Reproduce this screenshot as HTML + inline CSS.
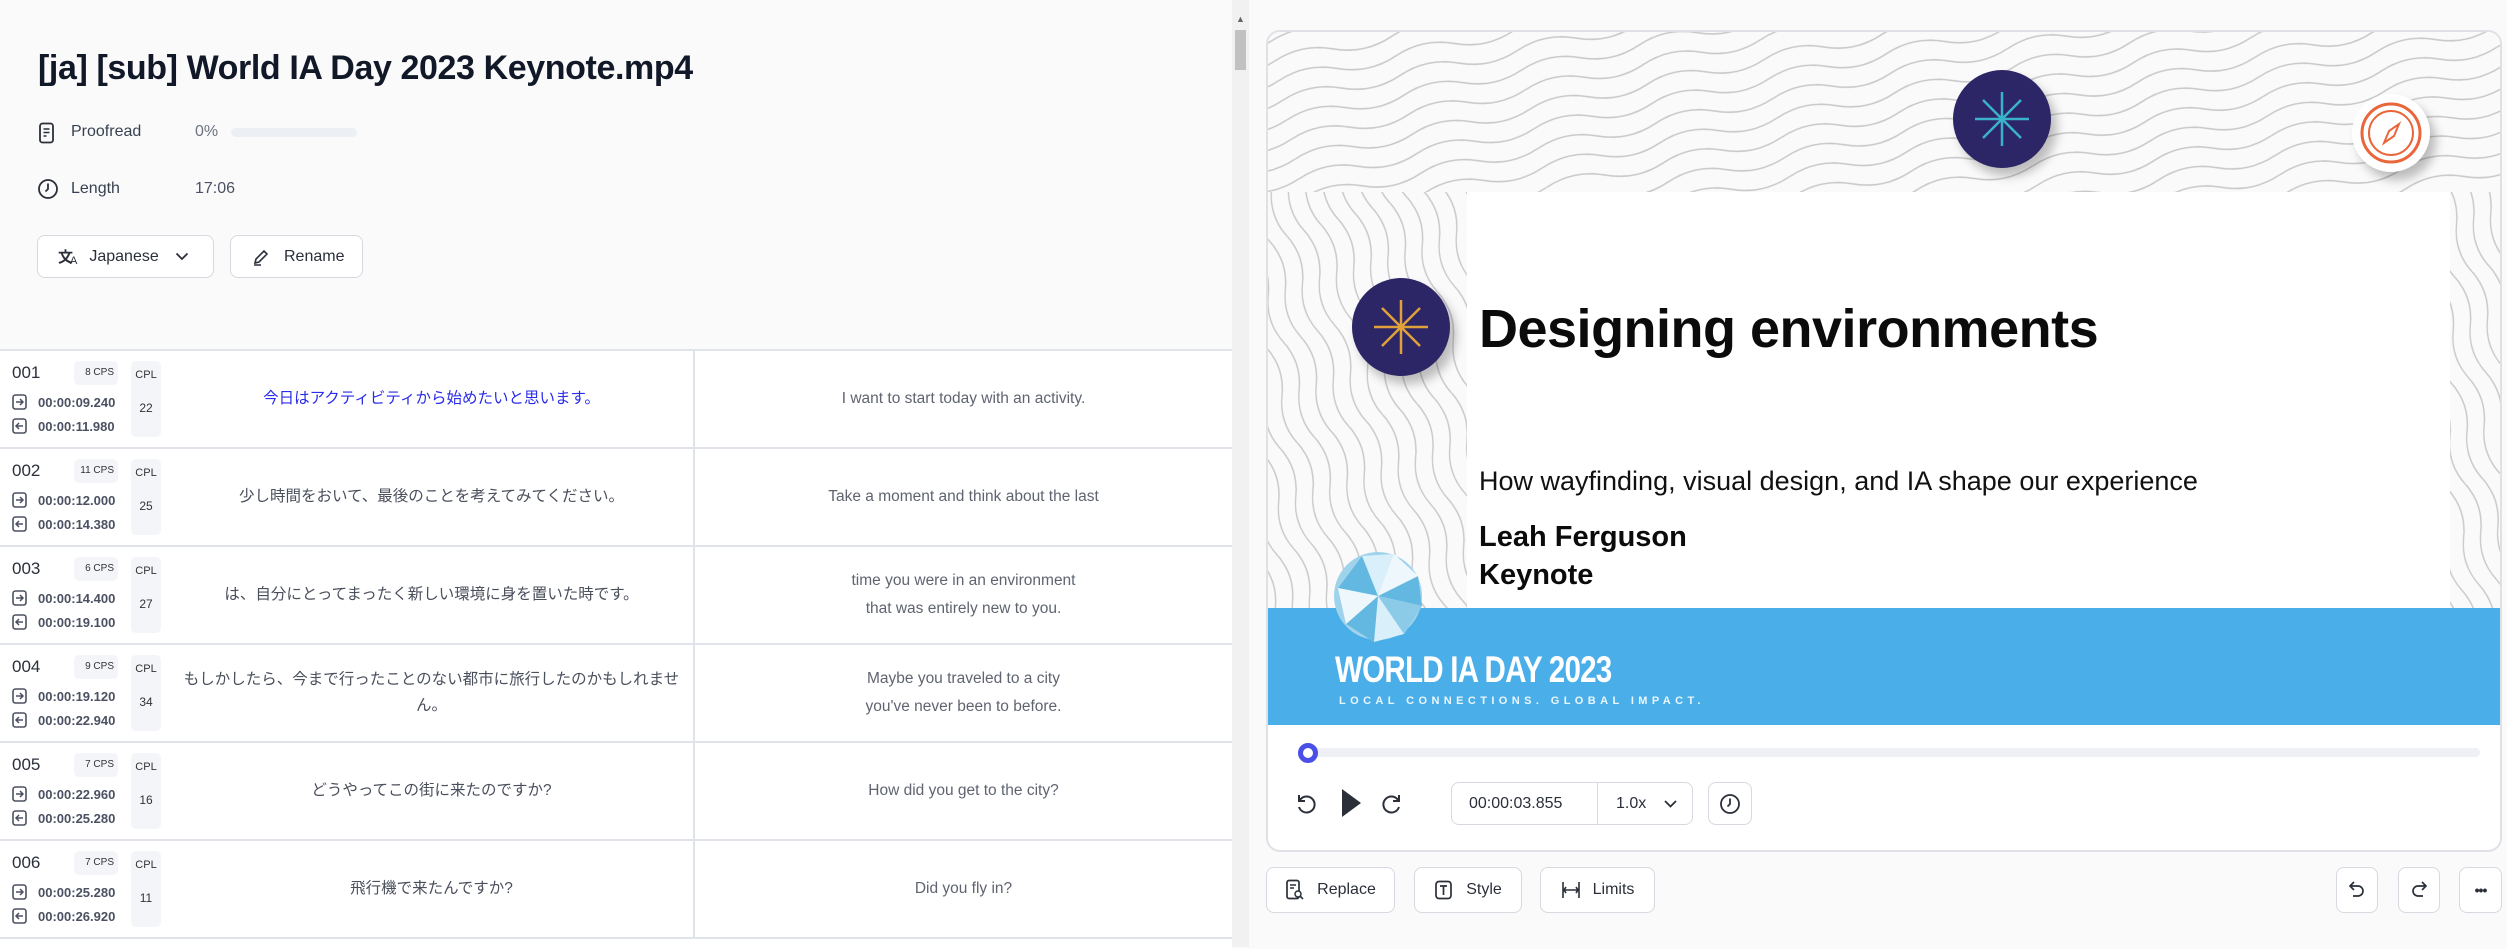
<!DOCTYPE html>
<html><head><meta charset="utf-8">
<style>
*{box-sizing:border-box;margin:0;padding:0}
body{width:2507px;height:947px;overflow:hidden;background:#fafafb;font-family:"Liberation Sans","Noto Sans CJK JP",sans-serif;color:#1f2330;position:relative}
.abs{position:absolute}
.title{left:38px;top:49px;font-size:34px;font-weight:bold;color:#111827;letter-spacing:-0.4px}
.meta{font-size:16px;color:#374151}
.btn{position:absolute;border:1px solid #d6d9e0;border-radius:8px;background:#fff;font-size:16px;color:#2a2f3a;display:flex;align-items:center}
.table{position:absolute;left:0;top:349px;width:1232px;height:600px;background:#fff;border-top:2px solid #e1e3ea}
.row{position:absolute;left:0;width:1232px;height:98px;border-bottom:2px solid #e1e3ea}
.num{position:absolute;left:12px;top:12px;font-size:17px;color:#2a2f3a}
.cps{position:absolute;left:74px;top:10px;width:44px;height:24px;background:#f4f5f8;border-radius:5px;font-size:10px;color:#333;text-align:right;padding-right:4px;line-height:24px;white-space:nowrap}
.cpl{position:absolute;left:131px;top:10px;width:30px;height:76px;background:#f4f5f8;border-radius:5px;font-size:11px;color:#333;text-align:center}
.cpl b{display:block;font-weight:normal;margin-top:8px}
.cpl i{display:block;font-style:normal;font-size:12px;margin-top:20px}
.tc{position:absolute;left:12px;font-size:13px;font-weight:bold;color:#4b5162;display:flex;align-items:center}
.tc svg{margin-right:11px}
.jp{position:absolute;left:170px;width:523px;top:0;height:96px;display:flex;align-items:center;justify-content:center;text-align:center;font-size:15.5px;color:#4a4f5c;line-height:26px;padding:0 8px}
.en{position:absolute;left:693px;width:539px;top:0;height:96px;border-left:2px solid #e1e3ea;display:flex;align-items:center;justify-content:center;text-align:center;font-size:15.5px;color:#5f6470;line-height:28px}
.card{position:absolute;left:1266px;top:30px;width:1236px;height:822px;border:2px solid #dfe1e7;border-radius:14px;background:#fff;overflow:hidden}
.circle{position:absolute;border-radius:50%;background:#2c2566;box-shadow:6px 8px 10px rgba(0,0,0,.25)}
.tb{position:absolute;top:867px;height:46px;border:1px solid #d6d9e0;border-radius:8px;background:#fff;font-size:16px;color:#2a2f3a;display:flex;align-items:center;justify-content:center}
</style></head><body>

<svg width="0" height="0" style="position:absolute"><defs>
<symbol id="in" viewBox="0 0 15 16"><rect x="1" y="1" width="13" height="14" rx="2.5" fill="none" stroke="#4b5162" stroke-width="1.6"/><path d="M4 8h7M8 5l3 3-3 3" fill="none" stroke="#4b5162" stroke-width="1.5"/></symbol>
<symbol id="out" viewBox="0 0 15 16"><rect x="1" y="1" width="13" height="14" rx="2.5" fill="none" stroke="#4b5162" stroke-width="1.6"/><path d="M11 8H4M7 5L4 8l3 3" fill="none" stroke="#4b5162" stroke-width="1.5"/></symbol>
</defs></svg>

<div class="abs title">[ja] [sub] World IA Day 2023 Keynote.mp4</div>

<svg class="abs" style="left:38px;top:122px" width="18" height="22" viewBox="0 0 18 22"><rect x="2" y="1.5" width="13" height="19" rx="2.5" fill="none" stroke="#2a2f3a" stroke-width="1.8"/><path d="M5.5 7h6M5.5 10.5h6M5.5 14h3" stroke="#2a2f3a" stroke-width="1.6"/></svg>
<div class="abs meta" style="left:71px;top:123px">Proofread</div>
<div class="abs meta" style="left:195px;top:123px;color:#6b7280">0%</div>
<div class="abs" style="left:231px;top:128px;width:126px;height:9px;border-radius:5px;background:#eceff4"></div>

<svg class="abs" style="left:37px;top:178px" width="22" height="22" viewBox="0 0 22 22"><circle cx="11" cy="11" r="9" fill="none" stroke="#2a2f3a" stroke-width="1.8"/><path d="M11 5.5V11l-2.5 2.5" fill="none" stroke="#2a2f3a" stroke-width="1.8"/></svg>
<div class="abs meta" style="left:71px;top:180px">Length</div>
<div class="abs meta" style="left:195px;top:180px;color:#4b5162">17:06</div>

<div class="btn" style="left:37px;top:235px;width:177px;height:43px"><span style="margin-left:20px;font-size:15px;font-weight:bold">文</span><span style="margin-left:-3px;font-size:11px;margin-top:8px">A</span><span style="margin-left:12px">Japanese</span><svg style="margin-left:16px" width="14" height="9" viewBox="0 0 14 9"><path d="M1.5 1.5l5.5 5.5 5.5-5.5" fill="none" stroke="#2a2f3a" stroke-width="1.8"/></svg></div>
<div class="btn" style="left:230px;top:235px;width:133px;height:43px"><svg style="margin-left:21px" width="18" height="18" viewBox="0 0 18 18"><path d="M3 15l1-4 8-8 3 3-8 8z M2 17h7" fill="none" stroke="#2a2f3a" stroke-width="1.6"/></svg><span style="margin-left:14px">Rename</span></div>

<div class="abs" style="left:1232px;top:0;width:17px;height:947px;background:#f1f1f1"></div>
<div class="abs" style="left:1235px;top:30px;width:11px;height:40px;background:#c1c1c1"></div>
<div class="abs" style="left:1236px;top:14px;font-size:9px;color:#666">▲</div>

<div class="table">
 <div class="row" style="top:0">
  <div class="num">001</div><div class="cps">8 CPS</div><div class="cpl"><b>CPL</b><i>22</i></div>
  <div class="tc" style="top:43px"><svg width="15" height="16"><use href="#in"/></svg>00:00:09.240</div>
  <div class="tc" style="top:67px"><svg width="15" height="16"><use href="#out"/></svg>00:00:11.980</div>
  <div class="jp" style="color:#2b2bea">今日はアクティビティから始めたいと思います。</div>
  <div class="en">I want to start today with an activity.</div>
 </div>
 <div class="row" style="top:98px">
  <div class="num">002</div><div class="cps">11 CPS</div><div class="cpl"><b>CPL</b><i>25</i></div>
  <div class="tc" style="top:43px"><svg width="15" height="16"><use href="#in"/></svg>00:00:12.000</div>
  <div class="tc" style="top:67px"><svg width="15" height="16"><use href="#out"/></svg>00:00:14.380</div>
  <div class="jp">少し時間をおいて、最後のことを考えてみてください。</div>
  <div class="en">Take a moment and think about the last</div>
 </div>
 <div class="row" style="top:196px">
  <div class="num">003</div><div class="cps">6 CPS</div><div class="cpl"><b>CPL</b><i>27</i></div>
  <div class="tc" style="top:43px"><svg width="15" height="16"><use href="#in"/></svg>00:00:14.400</div>
  <div class="tc" style="top:67px"><svg width="15" height="16"><use href="#out"/></svg>00:00:19.100</div>
  <div class="jp">は、自分にとってまったく新しい環境に身を置いた時です。</div>
  <div class="en">time you were in an environment<br>that was entirely new to you.</div>
 </div>
 <div class="row" style="top:294px">
  <div class="num">004</div><div class="cps">9 CPS</div><div class="cpl"><b>CPL</b><i>34</i></div>
  <div class="tc" style="top:43px"><svg width="15" height="16"><use href="#in"/></svg>00:00:19.120</div>
  <div class="tc" style="top:67px"><svg width="15" height="16"><use href="#out"/></svg>00:00:22.940</div>
  <div class="jp">もしかしたら、今まで行ったことのない都市に旅行したのかもしれません。</div>
  <div class="en">Maybe you traveled to a city<br>you've never been to before.</div>
 </div>
 <div class="row" style="top:392px">
  <div class="num">005</div><div class="cps">7 CPS</div><div class="cpl"><b>CPL</b><i>16</i></div>
  <div class="tc" style="top:43px"><svg width="15" height="16"><use href="#in"/></svg>00:00:22.960</div>
  <div class="tc" style="top:67px"><svg width="15" height="16"><use href="#out"/></svg>00:00:25.280</div>
  <div class="jp">どうやってこの街に来たのですか?</div>
  <div class="en">How did you get to the city?</div>
 </div>
 <div class="row" style="top:490px">
  <div class="num">006</div><div class="cps">7 CPS</div><div class="cpl"><b>CPL</b><i>11</i></div>
  <div class="tc" style="top:43px"><svg width="15" height="16"><use href="#in"/></svg>00:00:25.280</div>
  <div class="tc" style="top:67px"><svg width="15" height="16"><use href="#out"/></svg>00:00:26.920</div>
  <div class="jp">飛行機で来たんですか?</div>
  <div class="en">Did you fly in?</div>
 </div>
</div>

<div class="card">
 <div class="abs" style="left:0;top:0;width:1236px;height:693px;background:#fafafa;overflow:hidden">
  <svg width="1236" height="693" style="position:absolute;left:0;top:0">
   <defs>
    <pattern id="topo" width="240" height="60" patternUnits="userSpaceOnUse" patternTransform="rotate(-12)">
     <path d="M0 10 Q30 -2 60 10 T120 10 T180 10 T240 10 M0 30 Q30 18 60 30 T120 30 T180 30 T240 30 M0 50 Q30 38 60 50 T120 50 T180 50 T240 50" fill="none" stroke="#c9c9c9" stroke-width="1.5"/>
    </pattern>
    <pattern id="topo2" width="200" height="54" patternUnits="userSpaceOnUse" patternTransform="rotate(72)">
     <path d="M0 9 Q25 -2 50 9 T100 9 T150 9 T200 9 M0 27 Q25 16 50 27 T100 27 T150 27 T200 27 M0 45 Q25 34 50 45 T100 45 T150 45 T200 45" fill="none" stroke="#c9c9c9" stroke-width="1.5"/>
    </pattern>
   </defs>
   <rect width="1236" height="693" fill="url(#topo)"/>
   <rect x="0" y="160" width="200" height="420" fill="#fafafa"/>
   <rect x="0" y="160" width="200" height="420" fill="url(#topo2)"/>
   <rect x="1182" y="160" width="54" height="420" fill="#fafafa"/>
   <rect x="1182" y="160" width="54" height="420" fill="url(#topo2)"/>
  </svg>
  <div class="abs" style="left:199px;top:160px;width:983px;height:418px;background:#fff"></div>
  <div class="abs" style="left:211px;top:266px;font-size:54px;font-weight:bold;color:#0b0b0b;letter-spacing:-0.5px">Designing environments</div>
  <div class="abs" style="left:211px;top:434px;font-size:27px;color:#111">How wayfinding, visual design, and IA shape our experience</div>
  <div class="abs" style="left:211px;top:486px;font-size:29px;font-weight:bold;color:#0b0b0b;line-height:38px">Leah Ferguson<br>Keynote</div>
  <div class="circle" style="left:685px;top:38px;width:98px;height:98px"><svg width="98" height="98"><g stroke="#3ab2cc" stroke-width="2.5"><path d="M49 22v54M22 49h54M30 30l38 38M68 30L30 68"/></g></svg></div>
  <div class="circle" style="left:84px;top:246px;width:98px;height:98px"><svg width="98" height="98"><g stroke="#e0a13a" stroke-width="2.5"><path d="M49 22v54M22 49h54M30 30l38 38M68 30L30 68"/></g></svg></div>
  <div class="circle" style="left:1084px;top:62px;width:78px;height:78px;background:#fff"><svg width="78" height="78"><circle cx="39" cy="39" r="29" fill="none" stroke="#e8663a" stroke-width="3"/><circle cx="39" cy="39" r="22" fill="none" stroke="#e8663a" stroke-width="2"/><path d="M47 30l-5 12-10 7 5-12z" fill="none" stroke="#e8663a" stroke-width="2"/></svg></div>
  <div class="abs" style="left:0;top:576px;width:1236px;height:117px;background:#4aaee8"></div>
  <svg class="abs" style="left:64px;top:512px" width="96" height="110" viewBox="0 0 96 110"><circle cx="46" cy="52" r="44" fill="#9fd3ec"/><path d="M6 44L30 12 62 10 86 32 90 62 72 90 42 98 14 80z" fill="#d9eff9"/><path d="M30 12l16 40-40-8zM46 52l40-20 4 30zM46 52l-32 28 28 18zM46 52l26 38" fill="#62b8e0"/><path d="M46 52L62 10l24 22zM14 80l-8-36 40 8z" fill="#eef8fc"/><path d="M46 52l44 10-18 28z" fill="#8ccbe8"/></svg>
  <div class="abs" style="left:67px;top:617px;font-size:37px;color:#fff;letter-spacing:-1px;font-weight:bold;transform:scaleX(.8);transform-origin:left">WORLD IA DAY 2023</div>
  <div class="abs" style="left:71px;top:663px;font-size:11px;color:#eaf6fd;letter-spacing:4.4px;font-weight:bold">LOCAL CONNECTIONS. GLOBAL IMPACT.</div>
 </div>
 <div class="abs" style="left:34px;top:716px;width:1178px;height:9px;border-radius:5px;background:#eef0f5"></div>
 <div class="abs" style="left:30px;top:711px;width:20px;height:20px;border-radius:50%;border:5px solid #4a4fe8;background:#fff"></div>
 <svg class="abs" style="left:26px;top:760px" width="24" height="24" viewBox="0 0 24 24"><path d="M6 8a8 8 0 1 1-1 7" fill="none" stroke="#2a2f3a" stroke-width="2"/><path d="M5 3v6h6" fill="none" stroke="#2a2f3a" stroke-width="2"/></svg>
 <svg class="abs" style="left:72px;top:756px" width="22" height="30" viewBox="0 0 22 30"><path d="M2 1l19 14L2 29z" fill="#2a2f3a"/></svg>
 <svg class="abs" style="left:112px;top:760px" width="24" height="24" viewBox="0 0 24 24"><path d="M18 8a8 8 0 1 0 1 7" fill="none" stroke="#2a2f3a" stroke-width="2"/><path d="M19 3v6h-6" fill="none" stroke="#2a2f3a" stroke-width="2"/></svg>
 <div class="abs" style="left:183px;top:750px;width:242px;height:43px;border:1px solid #d6d9e0;border-radius:8px;font-size:16px;color:#2a2f3a">
  <span class="abs" style="left:17px;top:12px">00:00:03.855</span>
  <div class="abs" style="left:145px;top:0;width:1px;height:41px;background:#d6d9e0"></div>
  <span class="abs" style="left:164px;top:12px">1.0x</span>
  <svg class="abs" style="left:212px;top:17px" width="13" height="8" viewBox="0 0 13 8"><path d="M1 1l5.5 5.5L12 1" fill="none" stroke="#2a2f3a" stroke-width="1.8"/></svg>
 </div>
 <div class="abs" style="left:440px;top:750px;width:44px;height:43px;border:1px solid #d6d9e0;border-radius:8px"><svg style="margin:10px 0 0 10px" width="22" height="22" viewBox="0 0 22 22"><circle cx="11" cy="11" r="9" fill="none" stroke="#2a2f3a" stroke-width="1.8"/><path d="M11 5.5V11l-2.5 2.5" fill="none" stroke="#2a2f3a" stroke-width="1.8"/></svg></div>
</div>

<div class="tb" style="left:1266px;width:129px"><svg width="20" height="22" viewBox="0 0 20 22"><rect x="2" y="1.5" width="12" height="18" rx="2" fill="none" stroke="#2a2f3a" stroke-width="1.7"/><path d="M5 6h6M5 9h4" stroke="#2a2f3a" stroke-width="1.5"/><circle cx="13" cy="15" r="3" fill="#fff" stroke="#2a2f3a" stroke-width="1.5"/><path d="M15 17l3 3" stroke="#2a2f3a" stroke-width="1.6"/></svg><span style="margin-left:12px">Replace</span></div>
<div class="tb" style="left:1414px;width:108px"><svg width="20" height="20" viewBox="0 0 20 20"><rect x="2" y="1.5" width="15" height="17" rx="3" fill="none" stroke="#2a2f3a" stroke-width="1.7"/><path d="M6 6h7M9.5 6v9" stroke="#2a2f3a" stroke-width="1.7"/></svg><span style="margin-left:12px">Style</span></div>
<div class="tb" style="left:1540px;width:115px"><svg width="20" height="20" viewBox="0 0 20 20"><path d="M2 2v16M18 2v16M4 10h12M5 7l-2 3 2 3M15 7l2 3-2 3" fill="none" stroke="#2a2f3a" stroke-width="1.6"/></svg><span style="margin-left:12px">Limits</span></div>
<div class="tb" style="left:2336px;width:42px"><svg width="18" height="20" viewBox="0 0 18 20"><path d="M6 2L2 6l4 4M2 6h8a5 5 0 0 1 0 10H5" fill="none" stroke="#2a2f3a" stroke-width="1.7"/></svg></div>
<div class="tb" style="left:2398px;width:42px"><svg width="18" height="20" viewBox="0 0 18 20"><path d="M12 2l4 4-4 4M16 6H8a5 5 0 0 0 0 10h5" fill="none" stroke="#2a2f3a" stroke-width="1.7"/></svg></div>
<div class="tb" style="left:2459px;width:43px;font-weight:bold;font-size:14px;letter-spacing:-1px">•••</div>

</body></html>
